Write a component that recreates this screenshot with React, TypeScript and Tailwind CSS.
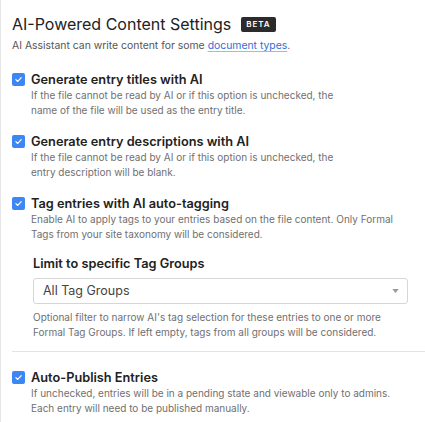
type OptionProps = {
  label: string;
  children: React.ReactNode;
};

function CheckIcon() {
  return (
    <span className="mt-[1px] flex h-[13px] w-[13px] shrink-0 items-center justify-center rounded-[2px] bg-[#3d87f5]">
      <svg viewBox="0 0 12 12" className="h-[9px] w-[9px]" fill="none">
        <path d="M2.5 6.2 5 8.6 9.6 3.6" stroke="white" strokeWidth="1.6" strokeLinecap="round" strokeLinejoin="round" />
      </svg>
    </span>
  );
}

function Option({ label, children }: OptionProps) {
  return (
    <div className="flex gap-[6px]">
      <CheckIcon />
      <div className="flex flex-col">
        <span className="text-[12.75px] font-semibold leading-[15px] text-[#222]">{label}</span>
        <p className="mt-[1px] text-[10px] leading-[15px] text-[#707070]">{children}</p>
      </div>
    </div>
  );
}

export default function App() {
  return (
    <div
      className="min-h-[422px] w-[425px] border-l border-[#e6e6e6] bg-white pl-[11px] pt-[14px]"
      style={{ fontFamily: 'Inter, "Noto Sans", sans-serif' }}
    >
      <div className="flex items-center gap-[10px]">
        <h1 className="text-[16px] font-normal leading-[20px] text-[#222]">AI-Powered Content Settings</h1>
        <span className="rounded-[2px] bg-[#2b2b2b] px-[5px] py-[2px] text-[8px] font-semibold leading-[11px] tracking-[0.12em] text-white">
          BETA
        </span>
      </div>
      <p className="mt-[5px] text-[10.4px] leading-[14px] text-[#555]">
        AI Assistant can write content for some{' '}
        <a className="text-[#2f6fd6] underline decoration-[#9dbbe8] underline-offset-2">document types</a>.
      </p>

      <div className="mt-[19px] flex flex-col gap-[16px] pr-[14px]">
        <Option label="Generate entry titles with AI">
          If the file cannot be read by AI or if this option is unchecked, the
          <br />
          name of the file will be used as the entry title.
        </Option>
        <Option label="Generate entry descriptions with AI">
          If the file cannot be read by AI or if this option is unchecked, the
          <br />
          entry description will be blank.
        </Option>
        <Option label="Tag entries with AI auto-tagging">
          Enable AI to apply tags to your entries based on the file content. Only Formal Tags from your site
          taxonomy will be considered.
        </Option>
      </div>

      <div className="ml-[21px] mr-[17px] mt-[14px]">
        <label className="block text-[12.75px] font-semibold leading-[15px] text-[#222]">
          Limit to specific Tag Groups
        </label>
        <div className="mt-[7px] flex h-[26px] items-center justify-between rounded-[3px] border border-[#d6d6d6] pl-[9px] pr-[8px]">
          <span className="text-[12.5px] text-[#444]">All Tag Groups</span>
          <svg viewBox="0 0 8 5" className="h-[4px] w-[7px]">
            <path d="M0 0h8L4 5z" fill="#9a9a9a" />
          </svg>
        </div>
        <p className="mt-[6px] text-[10px] leading-[15px] text-[#707070]">
          Optional filter to narrow AI's tag selection for these entries to one or more Formal Tag Groups. If left
          empty, tags from all groups will be considered.
        </p>
      </div>

      <div className="mt-[11px] h-px bg-[#e3e3e3]" />

      <div className="mt-[18px] pr-[14px]">
        <Option label="Auto-Publish Entries">
          If unchecked, entries will be in a pending state and viewable only to admins. Each entry will need to be
          published manually.
        </Option>
      </div>
    </div>
  );
}
